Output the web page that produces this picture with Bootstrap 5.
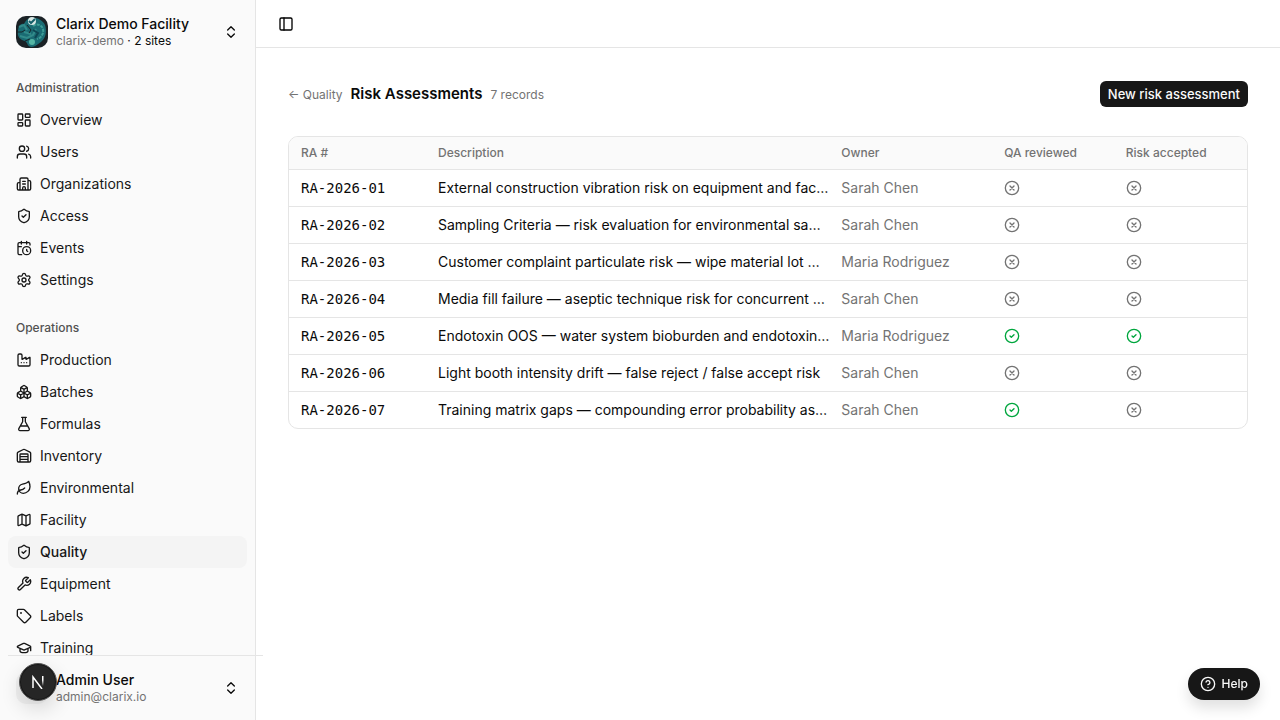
<!DOCTYPE html>
<html lang="en">
<head>
<meta charset="utf-8">
<meta name="viewport" content="width=device-width, initial-scale=1">
<title>Risk Assessments</title>
<link href="https://cdn.jsdelivr.net/npm/bootstrap@5.3.0/dist/css/bootstrap.min.css" rel="stylesheet">
<style>
  :root { --ink: #0a0a0a; --muted: #737373; --line: #e5e5e5; --surface: #fafafa; }
  body { font-family: Inter, "Liberation Sans", sans-serif; font-size: 14px; line-height: 20px; color: var(--ink); }
  a { color: inherit; text-decoration: none; }
  .ico { width: 16px; height: 16px; flex: none; fill: none; stroke: currentColor; stroke-width: 2; stroke-linecap: round; stroke-linejoin: round; }
  .side { width: 256px; background: var(--surface); border-right: 1px solid var(--line); }
  .switcher { border: 0; background: none; color: inherit; padding: 8px; height: 48px; line-height: 18px; }
  .fs-12 { font-size: 12px; line-height: 16px; }
  .text-soft { color: var(--muted); }
  .logo { width: 32px; height: 32px; border-radius: 10px; }
  .side-scroll { min-height: 0; overflow: hidden; }
  .group-label { height: 32px; padding: 0 8px; font-size: 12px; font-weight: 500; color: #525252; }
  .side-link { height: 32px; padding: 0 8px; border-radius: 8px; color: #171717; }
  .side-link.active { background: #f4f4f4; font-weight: 500; }
  .side-foot { position: relative; z-index: 2; padding: 9px 8px 8px; }
  .side-foot::before { content: ""; position: absolute; top: 0; left: 8px; right: -8px; border-top: 1px solid var(--line); }
  .avatar { width: 32px; height: 32px; border-radius: 10px; background: #f0f0f0; }
  .dev-badge { position: absolute; left: 19px; top: 8px; width: 38px; height: 38px; border: 1px solid #555; border-radius: 50%; background: #262626; box-shadow: 0 0 0 1px #171717 inset, 0 8px 20px rgba(0,0,0,.14); padding: 0; }
  .topbar { height: 48px; padding: 0 22px; border-bottom: 1px solid var(--line); }
  .topbar button { border: 0; background: none; padding: 0; width: 16px; height: 16px; display: flex; }
  .page-head { min-height: 28px; }
  .page-title { font-size: 15px; line-height: 24px; font-weight: 600; }
  .btn-ink { background: #171717; color: #fafafa; border: 0; border-radius: 6px; font-size: 13px; line-height: 18px; font-weight: 500; padding: 4px 8px; }
  .btn-ink:hover { background: #333; color: #fff; }
  .frame { border: 1px solid var(--line); border-radius: 10px; overflow: hidden; }
  .ra-table { margin: 0; table-layout: fixed; color: var(--ink); }
  .ra-table > :not(caption) > * > * { padding: 8px 12px; border-color: var(--line); color: inherit; vertical-align: middle; }
  .ra-table > thead > tr > th { background: var(--surface); font-size: 12px; line-height: 16px; font-weight: 500; color: var(--muted); }
  .ra-table > tbody > tr:last-child > td { border-bottom: 0; }
  .ra-table > tbody > tr > td.code { font-family: "DejaVu Sans Mono", monospace; }
  .ra-table > tbody > tr > td.what { padding-right: 0; }
  .ra-table > tbody > tr > td.who { color: var(--muted); }
  .ra-table .ico { display: block; color: var(--muted); }
  .ra-table .ico.ok { color: #00a63e; }
  .help { position: fixed; right: 20px; bottom: 20px; height: 32px; padding: 0 12px; gap: 6px; border: 0; border-radius: 16px; background: #171717; color: #fafafa; font-size: 12px; font-weight: 500; box-shadow: 0 8px 14px rgba(0,0,0,.12); }
</style>
</head>
<body>
<svg class="d-none" aria-hidden="true">
  <symbol id="i-dash" viewBox="0 0 24 24"><rect width="7" height="9" x="3" y="3" rx="1"/><rect width="7" height="5" x="14" y="3" rx="1"/><rect width="7" height="9" x="14" y="12" rx="1"/><rect width="7" height="5" x="3" y="16" rx="1"/></symbol>
  <symbol id="i-users" viewBox="0 0 24 24"><path d="M16 21v-2a4 4 0 0 0-4-4H6a4 4 0 0 0-4 4v2M22 21v-2a4 4 0 0 0-3-3.87M16 3.13a4 4 0 0 1 0 7.75"/><circle cx="9" cy="7" r="4"/></symbol>
  <symbol id="i-org" viewBox="0 0 24 24"><path d="M10 12h4M10 8h4M14 21v-3a2 2 0 0 0-4 0v3M6 10H4a2 2 0 0 0-2 2v7a2 2 0 0 0 2 2h16a2 2 0 0 0 2-2V9a2 2 0 0 0-2-2h-2M6 21V5a2 2 0 0 1 2-2h8a2 2 0 0 1 2 2v16"/></symbol>
  <symbol id="i-shield" viewBox="0 0 24 24"><path d="M20 13c0 5-3.5 7.5-7.66 8.95a1 1 0 0 1-.67-.01C7.5 20.5 4 18 4 13V6a1 1 0 0 1 1-1c2 0 4.5-1.2 6.24-2.72a1.17 1.17 0 0 1 1.52 0C14.51 3.81 17 5 19 5a1 1 0 0 1 1 1zM9 12l2 2 4-4"/></symbol>
  <symbol id="i-cal" viewBox="0 0 24 24"><path d="M16 14v2.2l1.6 1M16 2v4M21 7.5V6a2 2 0 0 0-2-2H5a2 2 0 0 0-2 2v14a2 2 0 0 0 2 2h3.5M3 10h5M8 2v4"/><circle cx="16" cy="16" r="6"/></symbol>
  <symbol id="i-gear" viewBox="0 0 24 24"><path d="M9.671 4.136a2.34 2.34 0 0 1 4.659 0 2.34 2.34 0 0 0 3.319 1.915 2.34 2.34 0 0 1 2.33 4.033 2.34 2.34 0 0 0 0 3.831 2.34 2.34 0 0 1-2.33 4.033 2.34 2.34 0 0 0-3.319 1.915 2.34 2.34 0 0 1-4.659 0 2.34 2.34 0 0 0-3.32-1.915 2.34 2.34 0 0 1-2.33-4.033 2.34 2.34 0 0 0 0-3.831A2.34 2.34 0 0 1 6.35 6.051a2.34 2.34 0 0 0 3.319-1.915"/><circle cx="12" cy="12" r="3"/></symbol>
  <symbol id="i-factory" viewBox="0 0 24 24"><path d="M12 16h.01M16 16h.01M8 16h.01M3 19a2 2 0 0 0 2 2h14a2 2 0 0 0 2-2V8.5a.5.5 0 0 0-.769-.422l-4.462 2.844A.5.5 0 0 1 15 10.5v-2a.5.5 0 0 0-.769-.422L9.77 10.922A.5.5 0 0 1 9 10.5V5a2 2 0 0 0-2-2H5a2 2 0 0 0-2 2z"/></symbol>
  <symbol id="i-boxes" viewBox="0 0 24 24"><path d="M2.97 12.92A2 2 0 0 0 2 14.63v3.24a2 2 0 0 0 .97 1.71l3 1.8a2 2 0 0 0 2.06 0L12 19v-5.5l-5-3-4.03 2.42ZM7 16.5l-4.74-2.85M7 16.5l5-3M7 16.5v5.17M12 13.5V19l3.97 2.38a2 2 0 0 0 2.06 0l3-1.8a2 2 0 0 0 .97-1.71v-3.24a2 2 0 0 0-.97-1.71L17 10.5l-5 3ZM17 16.5l-5-3M17 16.5l4.74-2.85M17 16.5v5.17M7.97 4.42A2 2 0 0 0 7 6.13v4.37l5 3 5-3V6.13a2 2 0 0 0-.97-1.71l-3-1.8a2 2 0 0 0-2.06 0l-3 1.8ZM12 8 7.26 5.15M12 8l4.74-2.85M12 13.5V8"/></symbol>
  <symbol id="i-flask" viewBox="0 0 24 24"><path d="M14 2v6a2 2 0 0 0 .245.96l5.51 10.08A2 2 0 0 1 18 22H6a2 2 0 0 1-1.755-2.96l5.51-10.08A2 2 0 0 0 10 8V2M6.453 15h11.094M8.5 2h7"/></symbol>
  <symbol id="i-ware" viewBox="0 0 24 24"><path d="M18 21V10a1 1 0 0 0-1-1H7a1 1 0 0 0-1 1v11M22 19a2 2 0 0 1-2 2H4a2 2 0 0 1-2-2V8a2 2 0 0 1 1.132-1.803l7.95-3.974a2 2 0 0 1 1.837 0l7.948 3.974A2 2 0 0 1 22 8zM6 13h12M6 17h12"/></symbol>
  <symbol id="i-leaf" viewBox="0 0 24 24"><path d="M11 20A7 7 0 0 1 9.8 6.1C15.5 5 17 4.48 19 2c1 2 2 4.18 2 8 0 5.5-4.78 10-10 10ZM2 21c0-3 1.85-5.36 5.08-6C9.5 14.52 12 13 13 12"/></symbol>
  <symbol id="i-map" viewBox="0 0 24 24"><path d="M14.106 5.553a2 2 0 0 0 1.788 0l3.659-1.83A1 1 0 0 1 21 4.619v12.764a1 1 0 0 1-.553.894l-4.553 2.277a2 2 0 0 1-1.788 0l-4.212-2.106a2 2 0 0 0-1.788 0l-3.659 1.83A1 1 0 0 1 3 19.381V6.618a1 1 0 0 1 .553-.894l4.553-2.277a2 2 0 0 1 1.788 0zM15 5.764v15M9 3.236v15"/></symbol>
  <symbol id="i-wrench" viewBox="0 0 24 24"><path d="M14.7 6.3a1 1 0 0 0 0 1.4l1.6 1.6a1 1 0 0 0 1.4 0l3.77-3.77a6 6 0 0 1-7.94 7.94l-6.91 6.91a2.12 2.12 0 0 1-3-3l6.91-6.91a6 6 0 0 1 7.94-7.94l-3.76 3.76z"/></symbol>
  <symbol id="i-tag" viewBox="0 0 24 24"><path d="M12.586 2.586A2 2 0 0 0 11.172 2H4a2 2 0 0 0-2 2v7.172a2 2 0 0 0 .586 1.414l8.704 8.704a2.426 2.426 0 0 0 3.42 0l6.58-6.58a2.426 2.426 0 0 0 0-3.42z"/><circle cx="7.5" cy="7.5" r=".5" fill="currentColor"/></symbol>
  <symbol id="i-cap" viewBox="0 0 24 24"><path d="M21.42 10.922a1 1 0 0 0-.019-1.838L12.83 5.18a2 2 0 0 0-1.66 0L2.6 9.08a1 1 0 0 0 0 1.832l8.57 3.908a2 2 0 0 0 1.66 0zM22 10v6M6 12.5V16a6 3 0 0 0 12 0v-3.5"/></symbol>
  <symbol id="i-updown" viewBox="0 0 24 24"><path d="m7 15 5 5 5-5M7 9l5-5 5 5"/></symbol>
  <symbol id="i-panel" viewBox="0 0 24 24"><rect width="18" height="18" x="3" y="3" rx="2"/><path d="M9 3v18"/></symbol>
  <symbol id="i-help" viewBox="0 0 24 24"><circle cx="12" cy="12" r="10"/><path d="M9.09 9a3 3 0 0 1 5.83 1c0 2-3 3-3 3M12 17h.01"/></symbol>
  <symbol id="i-no" viewBox="0 0 24 24"><circle cx="12" cy="12" r="10"/><path d="m15 9-6 6M9 9l6 6"/></symbol>
  <symbol id="i-yes" viewBox="0 0 24 24"><circle cx="12" cy="12" r="10"/><path d="m9 12 2 2 4-4"/></symbol>
</svg>

<div class="d-flex vh-100">
  <aside class="side d-flex flex-column flex-shrink-0">
    <div class="p-2">
      <button type="button" class="switcher d-flex align-items-center gap-2 w-100 text-start">
        <svg class="logo" viewBox="0 0 32 32" aria-hidden="true">
          <rect width="32" height="32" fill="#1b2226"/>
          <path d="M12 3c6-3 14 0 17 6 2 6 1 13-4 17-4 3-7 5-10 5-4-1-3-4-6-6-5-1-8-5-7-9 0-5 2-9 6-8 1-2 2-4 4-5z" fill="#1a6b73"/>
          <path d="M17 10c3-3 9-1 10 3 1 5-2 9-6 10" fill="none" stroke="#3d9d96" stroke-width="2" stroke-dasharray="3 1"/>
          <path d="M3 11l5-2 3 5M4 20l7 2 6-3 3-6M8 16l7 2" fill="none" stroke="#328b8a" stroke-width="2"/>
          <path d="M1 16h5l3-2M11 9l4 5-2 3M9 25l5-2" fill="none" stroke="#17262b" stroke-width="1"/>
          <path d="M17 14l5 3-3 5" fill="none" stroke="#0e4653" stroke-width="2"/>
          <circle cx="16" cy="26" r="3" fill="#55b6a4"/>
          <circle cx="16" cy="5" r="4" fill="#d9e8e5"/>
          <path d="m13 5 2 2 4-4" fill="none" stroke="#16606a" stroke-width="2"/>
        </svg>
        <span class="flex-grow-1">
          <span class="d-block fw-medium">Clarix Demo Facility</span>
          <span class="d-block fs-12"><span class="text-soft">clarix-demo</span> · <span>2 sites</span></span>
        </span>
        <svg class="ico"><use href="#i-updown"/></svg>
      </button>
    </div>
    <nav class="side-scroll flex-grow-1">
      <div class="p-2">
        <div class="group-label d-flex align-items-center">Administration</div>
        <a href="#" class="side-link d-flex align-items-center gap-2"><svg class="ico"><use href="#i-dash"/></svg>Overview</a>
        <a href="#" class="side-link d-flex align-items-center gap-2"><svg class="ico"><use href="#i-users"/></svg>Users</a>
        <a href="#" class="side-link d-flex align-items-center gap-2"><svg class="ico"><use href="#i-org"/></svg>Organizations</a>
        <a href="#" class="side-link d-flex align-items-center gap-2"><svg class="ico"><use href="#i-shield"/></svg>Access</a>
        <a href="#" class="side-link d-flex align-items-center gap-2"><svg class="ico"><use href="#i-cal"/></svg>Events</a>
        <a href="#" class="side-link d-flex align-items-center gap-2"><svg class="ico"><use href="#i-gear"/></svg>Settings</a>
      </div>
      <div class="p-2">
        <div class="group-label d-flex align-items-center">Operations</div>
        <a href="#" class="side-link d-flex align-items-center gap-2"><svg class="ico"><use href="#i-factory"/></svg>Production</a>
        <a href="#" class="side-link d-flex align-items-center gap-2"><svg class="ico"><use href="#i-boxes"/></svg>Batches</a>
        <a href="#" class="side-link d-flex align-items-center gap-2"><svg class="ico"><use href="#i-flask"/></svg>Formulas</a>
        <a href="#" class="side-link d-flex align-items-center gap-2"><svg class="ico"><use href="#i-ware"/></svg>Inventory</a>
        <a href="#" class="side-link d-flex align-items-center gap-2"><svg class="ico"><use href="#i-leaf"/></svg>Environmental</a>
        <a href="#" class="side-link d-flex align-items-center gap-2"><svg class="ico"><use href="#i-map"/></svg>Facility</a>
        <a href="#" class="side-link active d-flex align-items-center gap-2" aria-current="page"><svg class="ico"><use href="#i-shield"/></svg>Quality</a>
        <a href="#" class="side-link d-flex align-items-center gap-2"><svg class="ico"><use href="#i-wrench"/></svg>Equipment</a>
        <a href="#" class="side-link d-flex align-items-center gap-2"><svg class="ico"><use href="#i-tag"/></svg>Labels</a>
        <a href="#" class="side-link d-flex align-items-center gap-2"><svg class="ico"><use href="#i-cap"/></svg>Training</a>
      </div>
    </nav>
    <div class="side-foot">
      <button type="button" class="switcher d-flex align-items-center gap-2 w-100 text-start">
        <span class="avatar flex-shrink-0"></span>
        <span class="flex-grow-1">
          <span class="d-block fw-medium">Admin User</span>
          <span class="d-block fs-12 text-soft">admin@clarix.io</span>
        </span>
        <svg class="ico"><use href="#i-updown"/></svg>
      </button>
      <button type="button" class="dev-badge d-flex align-items-center justify-content-center" aria-label="Developer tools">
        <svg width="14" height="14" viewBox="0 0 14 14" fill="none" aria-hidden="true">
          <defs><linearGradient id="fade" x1="0" y1="0" x2="0" y2="1"><stop offset=".4" stop-color="#fff"/><stop offset="1" stop-color="#fff" stop-opacity="0"/></linearGradient></defs>
          <path d="M2 13V2l9 12" stroke="#fff" stroke-width="1.5"/><path d="M11 1h1.5v10H11z" fill="url(#fade)"/>
        </svg>
      </button>
    </div>
  </aside>

  <div class="flex-grow-1 overflow-hidden">
    <header class="topbar d-flex align-items-center">
      <button type="button" aria-label="Toggle sidebar"><svg class="ico"><use href="#i-panel"/></svg></button>
    </header>
    <main class="px-4 mx-2 pt-4">
      <div class="page-head d-flex align-items-center justify-content-between mt-2 mb-4">
        <div class="d-flex align-items-baseline gap-2">
          <a href="#" class="fs-12 text-soft">← Quality</a>
          <h1 class="page-title m-0">Risk Assessments</h1>
          <span class="fs-12 text-soft">7 records</span>
        </div>
        <button type="button" class="btn btn-ink">New risk assessment</button>
      </div>
      <div class="pt-1">
      <div class="frame">
        <table class="table ra-table">
          <colgroup><col style="width:14.3%"><col style="width:42.1%"><col style="width:17%"><col style="width:12.7%"><col></colgroup>
          <thead><tr><th scope="col">RA #</th><th scope="col">Description</th><th scope="col">Owner</th><th scope="col">QA reviewed</th><th scope="col">Risk accepted</th></tr></thead>
          <tbody>
            <tr><td class="code">RA-2026-01</td><td class="what text-nowrap">External construction vibration risk on equipment and fac…</td><td class="who">Sarah Chen</td><td><svg class="ico" role="img" aria-label="No"><use href="#i-no"/></svg></td><td><svg class="ico" role="img" aria-label="No"><use href="#i-no"/></svg></td></tr>
            <tr><td class="code">RA-2026-02</td><td class="what text-nowrap">Sampling Criteria — risk evaluation for environmental sa…</td><td class="who">Sarah Chen</td><td><svg class="ico" role="img" aria-label="No"><use href="#i-no"/></svg></td><td><svg class="ico" role="img" aria-label="No"><use href="#i-no"/></svg></td></tr>
            <tr><td class="code">RA-2026-03</td><td class="what text-nowrap">Customer complaint particulate risk — wipe material lot …</td><td class="who">Maria Rodriguez</td><td><svg class="ico" role="img" aria-label="No"><use href="#i-no"/></svg></td><td><svg class="ico" role="img" aria-label="No"><use href="#i-no"/></svg></td></tr>
            <tr><td class="code">RA-2026-04</td><td class="what text-nowrap">Media fill failure — aseptic technique risk for concurrent …</td><td class="who">Sarah Chen</td><td><svg class="ico" role="img" aria-label="No"><use href="#i-no"/></svg></td><td><svg class="ico" role="img" aria-label="No"><use href="#i-no"/></svg></td></tr>
            <tr><td class="code">RA-2026-05</td><td class="what text-nowrap">Endotoxin OOS — water system bioburden and endotoxin…</td><td class="who">Maria Rodriguez</td><td><svg class="ico ok" role="img" aria-label="Yes"><use href="#i-yes"/></svg></td><td><svg class="ico ok" role="img" aria-label="Yes"><use href="#i-yes"/></svg></td></tr>
            <tr><td class="code">RA-2026-06</td><td class="what text-nowrap">Light booth intensity drift — false reject / false accept risk</td><td class="who">Sarah Chen</td><td><svg class="ico" role="img" aria-label="No"><use href="#i-no"/></svg></td><td><svg class="ico" role="img" aria-label="No"><use href="#i-no"/></svg></td></tr>
            <tr><td class="code">RA-2026-07</td><td class="what text-nowrap">Training matrix gaps — compounding error probability as…</td><td class="who">Sarah Chen</td><td><svg class="ico ok" role="img" aria-label="Yes"><use href="#i-yes"/></svg></td><td><svg class="ico" role="img" aria-label="No"><use href="#i-no"/></svg></td></tr>
          </tbody>
        </table>
      </div>
      </div>
    </main>
  </div>
</div>
<button type="button" class="help d-flex align-items-center"><svg class="ico"><use href="#i-help"/></svg>Help</button>
<script src="https://cdn.jsdelivr.net/npm/bootstrap@5.3.0/dist/js/bootstrap.bundle.min.js"></script>
</body>
</html>
